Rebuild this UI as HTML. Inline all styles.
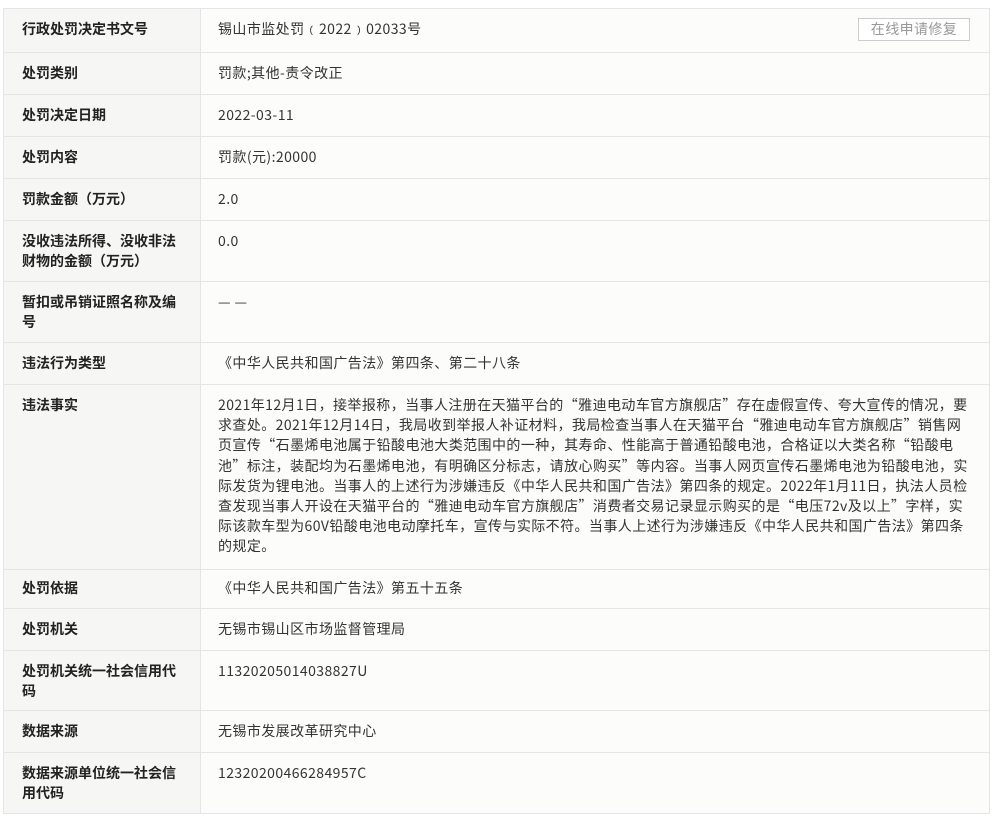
<!DOCTYPE html>
<html><head><meta charset="utf-8"><style>
body{margin:0;background:#fff;font-family:"Noto Sans CJK SC","Liberation Sans",sans-serif;font-size:14px;color:#333;width:1000px;height:821px;overflow:hidden;position:relative}
.t{position:absolute;left:3px;top:8px;width:985px;border:1px solid #e3e6e8;border-bottom:none;background:#fcfcfb}
.r{display:flex;border-bottom:1px solid #e3e6e8;box-sizing:border-box}
.l{width:197px;flex:none;background:#f6f6f5;border-right:1px solid #e3e6e8;box-sizing:border-box;padding:10px 18px 0 18px;font-weight:bold;color:#222;line-height:20px}
.v{flex:1;padding:10px 14px 0 17px;line-height:20.2px;white-space:nowrap;letter-spacing:0.42px}
.btn{position:absolute;left:858px;top:18px;width:112px;height:23px;border:1px solid #ccc;box-sizing:border-box;color:#999;text-align:center;line-height:21px;font-size:14px;background:#fff;letter-spacing:0.4px}
</style></head><body>
<div class="t">
<div class="r" style="height:44px"><div class="l">行政处罚决定书文号</div><div class="v">锡山市监处罚﹙2022﹚02033号</div></div>
<div class="r" style="height:42px"><div class="l">处罚类别</div><div class="v">罚款;其他-责令改正</div></div>
<div class="r" style="height:42px"><div class="l">处罚决定日期</div><div class="v">2022-03-11</div></div>
<div class="r" style="height:42px"><div class="l">处罚内容</div><div class="v">罚款(元):20000</div></div>
<div class="r" style="height:42px"><div class="l">罚款金额（万元）</div><div class="v">2.0</div></div>
<div class="r" style="height:61px"><div class="l">没收违法所得、没收非法财物的金额（万元）</div><div class="v">0.0</div></div>
<div class="r" style="height:61px"><div class="l">暂扣或吊销证照名称及编号</div><div class="v">— —</div></div>
<div class="r" style="height:42px"><div class="l">违法行为类型</div><div class="v">《中华人民共和国广告法》第四条、第二十八条</div></div>
<div class="r" style="height:185px"><div class="l">违法事实</div><div class="v">2021年12月1日，接举报称，当事人注册在天猫平台的“雅迪电动车官方旗舰店”存在虚假宣传、夸大宣传的情况，要<br>求查处。2021年12月14日，我局收到举报人补证材料，我局检查当事人在天猫平台“雅迪电动车官方旗舰店”销售网<br>页宣传“石墨烯电池属于铅酸电池大类范围中的一种，其寿命、性能高于普通铅酸电池，合格证以大类名称“铅酸电<br>池”标注，装配均为石墨烯电池，有明确区分标志，请放心购买”等内容。当事人网页宣传石墨烯电池为铅酸电池，实<br>际发货为锂电池。当事人的上述行为涉嫌违反《中华人民共和国广告法》第四条的规定。2022年1月11日，执法人员检<br>查发现当事人开设在天猫平台的“雅迪电动车官方旗舰店”消费者交易记录显示购买的是“电压72v及以上”字样，实<br>际该款车型为60V铅酸电池电动摩托车，宣传与实际不符。当事人上述行为涉嫌违反《中华人民共和国广告法》第四条<br>的规定。</div></div>
<div class="r" style="height:39px"><div class="l" style="padding-top:8px">处罚依据</div><div class="v" style="padding-top:8px">《中华人民共和国广告法》第五十五条</div></div>
<div class="r" style="height:42px"><div class="l">处罚机关</div><div class="v">无锡市锡山区市场监督管理局</div></div>
<div class="r" style="height:60px"><div class="l">处罚机关统一社会信用代码</div><div class="v">11320205014038827U</div></div>
<div class="r" style="height:42px"><div class="l">数据来源</div><div class="v">无锡市发展改革研究中心</div></div>
<div class="r" style="height:61px"><div class="l">数据来源单位统一社会信用代码</div><div class="v">12320200466284957C</div></div>
</div>
<div class="btn">在线申请修复</div>
</body></html>
